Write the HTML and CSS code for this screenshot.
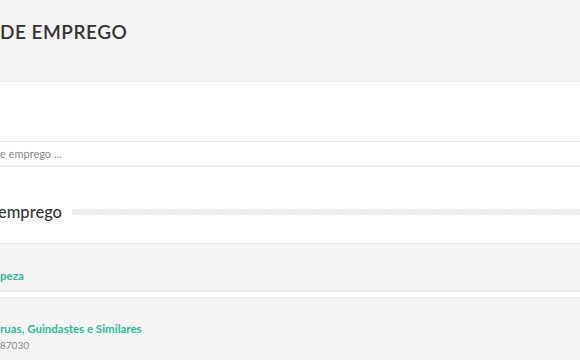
FILE: index.html
```html
<!DOCTYPE html>
<html lang="pt">
<head>
  <meta charset="UTF-8"/>
  <meta name="viewport" content="width=device-width, initial-scale=1.0"/>
  <title>Banco de Emprego</title>
  <link rel="stylesheet" href="styles.css">
</head>
<body>
  <header class="page-header">
    <div class="container">
      <h1>DE EMPREGO</h1>
    </div>
  </header>

  <div class="container">
    <form class="search-form">
      <input class="search-input" placeholder="e emprego ..." />
    </form>

    <div class="section-heading">
      <h2>emprego</h2>
      <span class="stripe"></span>
    </div>
  </div>

  <ul class="job-list">
    <li class="job">
      <a class="job-title" href="#">peza</a>
    </li>
    <li class="job">
      <a class="job-title" href="#">ruas, Guindastes e Similares</a>
      <small>87030</small>
    </li>
  </ul>
</body>
</html>
```

FILE: styles.css
```css
:root {
  --text: #333;
  --muted: #888;
  --green: #26bf9a;
  --light-bg: #f4f4f4;
  --border: #e6e6e6;
}

* {
  box-sizing: border-box;
  margin: 0;
  padding: 0;
}

body {
  font-family: 'Lato', sans-serif;
  color: var(--text);
  background: #fff;
  overflow: hidden;
}

.container {
  padding: 0;
}

.page-header {
  background: var(--light-bg);
  height: 82px;
  border-bottom: 1px solid #ececec;
}

.page-header h1 {
  font-size: 19px;
  font-weight: 600;
  letter-spacing: 0.5px;
  line-height: 24px;
  padding-top: 20px;
}

.search-form {
  margin-top: 59px;
}

.search-input {
  display: block;
  width: 100%;
  height: 26px;
  border: none;
  border-top: 1px solid var(--border);
  border-bottom: 2px solid #ececec;
  font-family: inherit;
  font-size: 11px;
  color: var(--text);
  padding: 0;
  outline: none;
}

.search-input::placeholder {
  color: var(--muted);
}

.section-heading {
  display: flex;
  align-items: center;
  gap: 10px;
  margin-top: 34px;
  height: 22px;
}

.section-heading h2 {
  font-size: 16.5px;
  font-weight: 500;
  margin-left: -2px;
  line-height: 22px;
}

.stripe {
  flex: 1;
  height: 6px;
  background: repeating-linear-gradient(90deg, #ececec 0 2px, #f4f4f4 2px 3px);
}

.job-list {
  list-style: none;
  margin-top: 20px;
}

.job {
  background: #f5f5f5;
  border-top: 1px solid #ececec;
  border-bottom: 2px solid #e8e8e8;
  padding: 24px 0 0;
  height: 49px;
  margin-bottom: 5px;
}

.job + .job {
  height: auto;
  padding-top: 23px;
  padding-bottom: 20px;
}

.job-title {
  display: block;
  color: var(--green);
  font-weight: 700;
  font-size: 11.5px;
  line-height: 16px;
  text-decoration: none;
}

.job small {
  display: block;
  color: var(--muted);
  font-size: 10px;
  line-height: 16px;
}
```
